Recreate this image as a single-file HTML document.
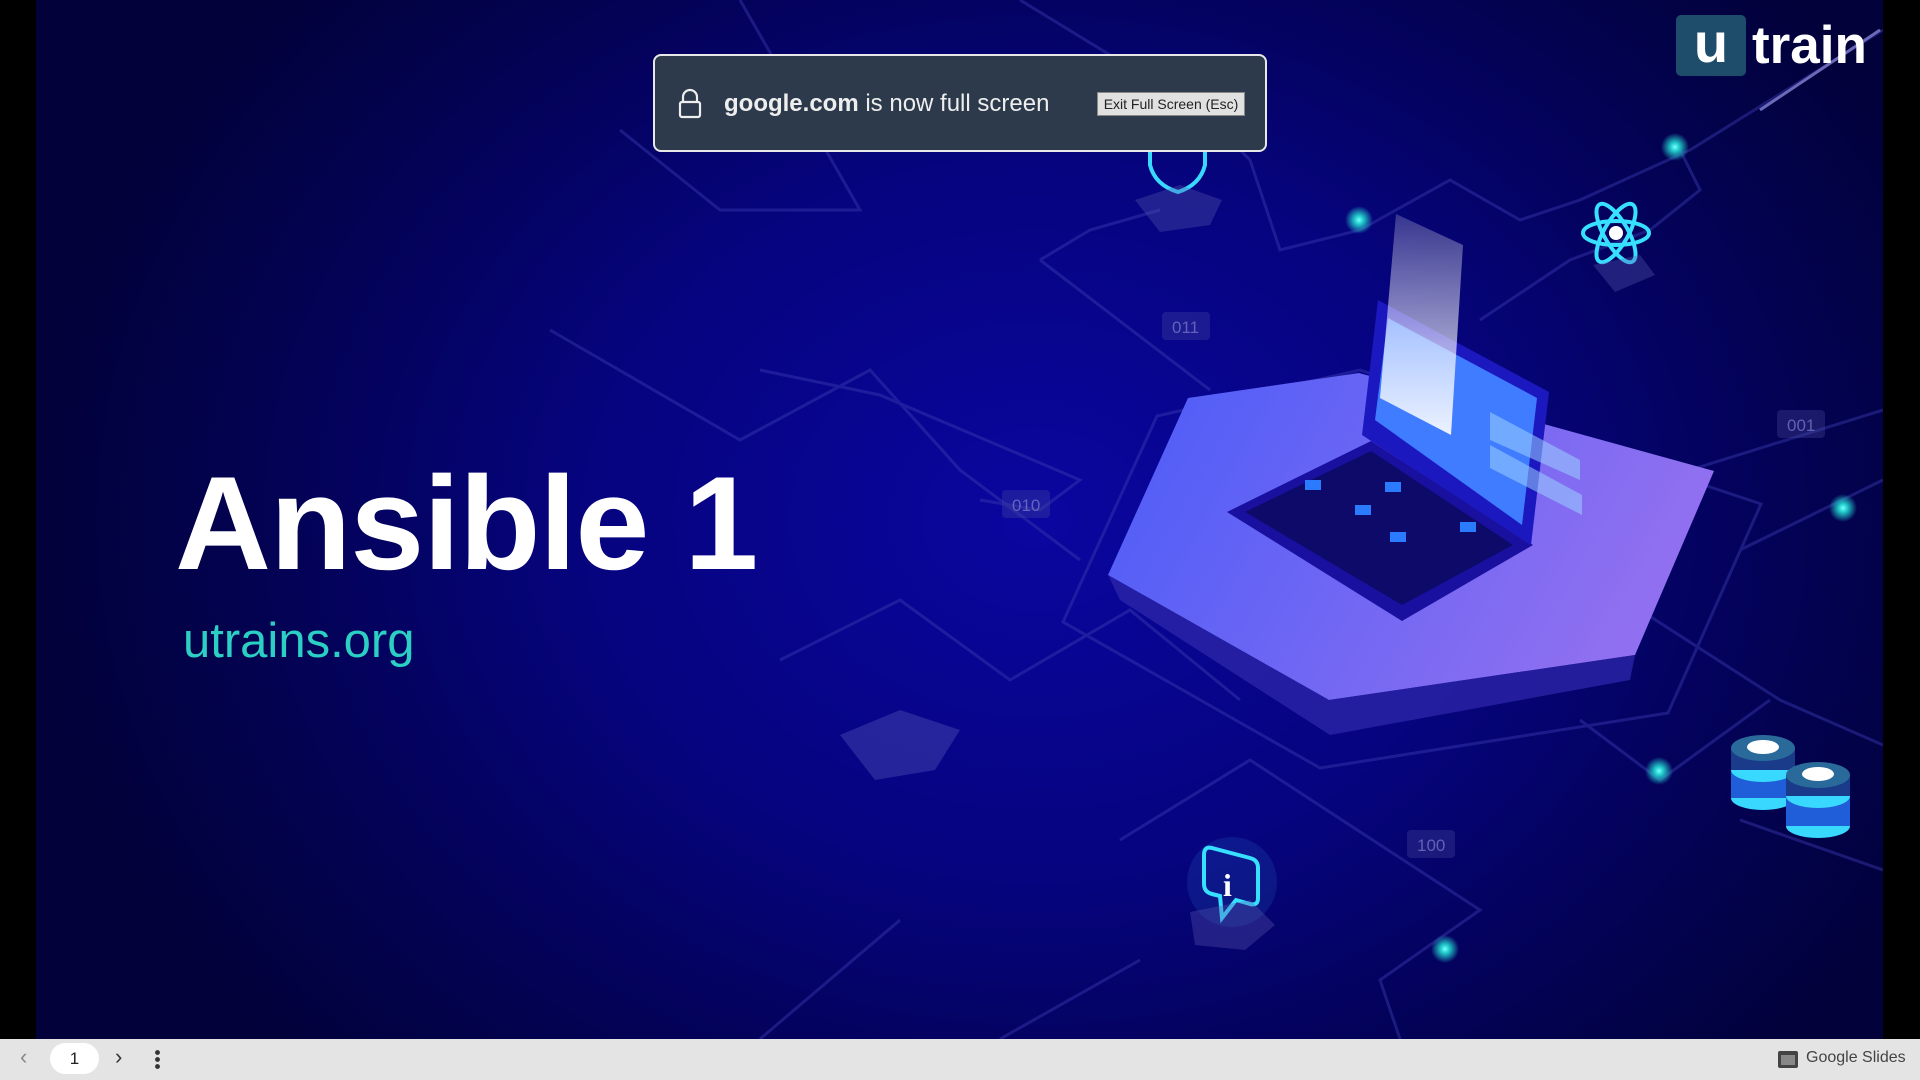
<!DOCTYPE html>
<html><head><meta charset="utf-8"><style>
*{margin:0;padding:0;box-sizing:border-box}
html,body{width:1920px;height:1080px;overflow:hidden;background:#000;font-family:"Liberation Sans",sans-serif}
#slide{position:absolute;left:36px;top:0;width:1847px;height:1039px;overflow:hidden;
background:radial-gradient(ellipse 1000px 800px at 1000px 520px,#0a06a0 0%,#06047e 45%,#030255 75%,#02013a 100%)}
.abs{position:absolute}
#bar{position:absolute;left:0;top:1039px;width:1920px;height:41px;background:#e4e4e4}
</style></head><body>
<div id="slide">
<svg class="abs" style="left:0;top:0" width="1847" height="1039" viewBox="36 0 1847 1039">
<defs>
<linearGradient id="hx" x1="0" y1="0" x2="1" y2="0.3"><stop offset="0" stop-color="#4a5cf8"/><stop offset="1" stop-color="#9070f0"/></linearGradient>
<radialGradient id="gl"><stop offset="0" stop-color="#7ff"/><stop offset="0.3" stop-color="#2cc"/><stop offset="1" stop-color="#2cc" stop-opacity="0"/></radialGradient>
<linearGradient id="gs" x1="0" y1="0" x2="0" y2="1"><stop offset="0" stop-color="#fff" stop-opacity="0.2"/><stop offset="1" stop-color="#fff" stop-opacity="0.9"/></linearGradient>
</defs>
<g fill="none" stroke="#3a3ab0" stroke-width="3" opacity="0.45">
<path d="M1020 0 L1200 110 L1250 160 L1280 250 L1360 230 L1450 180 L1520 220 L1580 200 L1690 150 L1883 30"/>
<path d="M1040 260 L1210 390 M1040 260 L1090 230 L1160 210"/>
<path d="M740 0 L860 210 L720 210 L620 130"/>
<path d="M760 370 L880 395 L1080 480 L1040 510 L980 500"/>
<path d="M550 330 L740 440 L870 370 L960 470 L1080 560"/>
<path d="M780 660 L900 600 L1010 680 L1130 610 L1240 700"/>
<path d="M1120 840 L1250 760 L1480 910 L1380 980 L1400 1039"/>
<path d="M1690 470 L1883 410 M1740 550 L1883 480"/>
<path d="M1640 610 L1780 700 L1883 745 M1580 720 L1660 780 L1770 700"/>
<path d="M1680 150 L1700 190 L1650 230 L1570 260 L1480 320"/>
<path d="M1740 820 L1883 870"/>
<path d="M1000 1039 L1140 960 M760 1039 L900 920"/>
<path d="M1063 622 L1157 416 L1360 370 L1761 504 L1668 713 L1320 768 Z"/>
</g>
<path d="M840 735 L900 710 L960 730 L935 770 L875 780 Z" fill="#6060c0" opacity="0.35"/>
<path d="M1188 398 L1359 373 L1714 471 L1635 655 L1329 700 L1108 575 Z" fill="url(#hx)"/>
<path d="M1108 575 L1329 700 L1635 655 L1630 680 L1330 735 L1120 600 Z" fill="#2a24a8" opacity="0.8"/>
<path d="M1227 512 L1371 441 L1533 545 L1402 621 Z" fill="#1a10a0"/>
<path d="M1245 512 L1371 451 L1513 545 L1402 605 Z" fill="#0d0a6a"/>
<g fill="#2a7bff"><rect x="1305" y="480" width="16" height="10"/><rect x="1355" y="505" width="16" height="10"/><rect x="1390" y="532" width="16" height="10"/><rect x="1460" y="522" width="16" height="10"/><rect x="1385" y="482" width="16" height="10"/></g>
<path d="M1362 435 L1378 300 L1549 392 L1531 545 Z" fill="#1c18c0"/>
<path d="M1375 420 L1388 318 L1537 398 L1522 525 Z" fill="#3f7cff"/>
<path d="M1490 412 L1580 460 L1580 480 L1490 440 Z M1490 445 L1582 495 L1582 515 L1490 468 Z" fill="#9ad0ff" opacity="0.55"/>
<path d="M1396 214 L1463 245 L1451 435 L1380 398 Z" fill="url(#gs)"/>
<g>
<circle cx="1359" cy="220" r="14" fill="url(#gl)"/><circle cx="1675" cy="147" r="14" fill="url(#gl)"/>
<circle cx="1843" cy="508" r="14" fill="url(#gl)"/><circle cx="1659" cy="771" r="14" fill="url(#gl)"/>
<circle cx="1445" cy="949" r="14" fill="url(#gl)"/>
</g>
<g fill="none" stroke="#38e0ff" stroke-width="4">
<ellipse cx="1616" cy="233" rx="33" ry="12"/><ellipse cx="1616" cy="233" rx="33" ry="12" transform="rotate(60 1616 233)"/><ellipse cx="1616" cy="233" rx="33" ry="12" transform="rotate(-60 1616 233)"/>
</g><circle cx="1616" cy="233" r="7" fill="#fff"/>
<path d="M1593 265 L1640 255 L1655 275 L1615 292 Z" fill="#5a5ab0" opacity="0.35"/>
<path d="M1150 140 Q1178 150 1205 140 L1205 165 Q1200 185 1178 192 Q1155 185 1150 165 Z" fill="none" stroke="#38d8ff" stroke-width="4"/>
<path d="M1135 200 L1180 185 L1222 200 L1210 225 L1160 232 Z" fill="#5a5ab0" opacity="0.35"/>
<circle cx="1232" cy="882" r="45" fill="#3ab0ff" opacity="0.12"/>
<path d="M1212 848 L1250 858 Q1258 860 1258 868 L1258 898 Q1258 906 1250 904 L1236 900 L1222 918 L1220 896 L1212 894 Q1204 892 1204 884 L1204 855 Q1204 846 1212 848 Z" fill="none" stroke="#38e0ff" stroke-width="4"/>
<text x="1223" y="896" font-family="Liberation Serif" font-weight="bold" font-size="32" fill="#fff">i</text>
<path d="M1190 912 L1250 900 L1275 925 L1245 950 L1195 945 Z" fill="#5a5ab0" opacity="0.35"/>
<g>
<ellipse cx="1763" cy="798" rx="32" ry="12" fill="#38d8ff"/><rect x="1731" y="770" width="64" height="28" fill="#1f5ed8"/><ellipse cx="1763" cy="770" rx="32" ry="12" fill="#38d8ff"/>
<rect x="1731" y="748" width="64" height="22" fill="#1a3a8a"/><ellipse cx="1763" cy="748" rx="32" ry="13" fill="#2a6a9a"/><ellipse cx="1763" cy="747" rx="16" ry="7" fill="#fff"/>
<ellipse cx="1818" cy="826" rx="32" ry="12" fill="#38d8ff"/><rect x="1786" y="796" width="64" height="30" fill="#1f5ed8"/><ellipse cx="1818" cy="796" rx="32" ry="12" fill="#38d8ff"/>
<rect x="1786" y="775" width="64" height="21" fill="#1a3a8a"/><ellipse cx="1818" cy="775" rx="32" ry="13" fill="#2a6a9a"/><ellipse cx="1818" cy="774" rx="16" ry="7" fill="#fff"/>
</g>
<g font-family="Liberation Sans" font-size="17" fill="#7a7ac8" opacity="0.8">
<rect x="1162" y="312" width="48" height="28" rx="4" fill="#4a4aa0" opacity="0.4"/><text x="1172" y="333">011</text>
<rect x="1002" y="490" width="48" height="28" rx="4" fill="#4a4aa0" opacity="0.4"/><text x="1012" y="511">010</text>
<rect x="1777" y="410" width="48" height="28" rx="4" fill="#4a4aa0" opacity="0.4"/><text x="1787" y="431">001</text>
<rect x="1407" y="830" width="48" height="28" rx="4" fill="#4a4aa0" opacity="0.4"/><text x="1417" y="851">100</text>
</g>
<path d="M1880 30 L1760 110" stroke="#6a6ab8" stroke-width="3"/>
</svg>
<div class="abs" style="left:139px;top:449px;font-size:133px;font-weight:bold;color:#fff;letter-spacing:-1px;line-height:150px">Ansible 1</div>
<div class="abs" style="left:147px;top:611px;font-size:49px;color:#2ccfc4;line-height:60px">utrains.org</div>
<div class="abs" style="left:1640px;top:15px;width:70px;height:61px;background:#1e4d6b;border-radius:5px;color:#fff;font-weight:bold;font-size:56px;text-align:center;line-height:56px">u</div>
<div class="abs" style="left:1716px;top:11px;color:#fff;font-weight:bold;font-size:53px;line-height:70px">train</div>
</div>
<div class="abs" style="left:653px;top:54px;width:614px;height:98px;background:#2c3a4b;border:2px solid #e8e8e8;border-radius:8px"></div>
<svg class="abs" style="left:678px;top:88px" width="24" height="32" viewBox="0 0 24 32"><path d="M5 14 V9 a7 7 0 0 1 14 0 V14" fill="none" stroke="#eee" stroke-width="2.2"/><rect x="2" y="14" width="20" height="15" rx="2" fill="none" stroke="#eee" stroke-width="2.2"/></svg>
<div class="abs" style="left:724px;top:90px;font-size:24px;color:#eee;white-space:nowrap"><b>google.com</b> is now full screen</div>
<div class="abs" style="left:1097px;top:92px;width:148px;height:24px;background:#e1e1e1;border:1px solid #888;font-size:14px;color:#222;text-align:center;line-height:22px">Exit Full Screen (Esc)</div>
<div id="bar">
<div class="abs" style="left:20px;top:5px;font-size:22px;color:#888">&#8249;</div>
<div class="abs" style="left:50px;top:4px;width:49px;height:31px;background:#fff;border-radius:16px;text-align:center;line-height:31px;font-size:17px;color:#222">1</div>
<div class="abs" style="left:115px;top:5px;font-size:22px;color:#333">&#8250;</div>
<div class="abs" style="left:155px;top:10px;width:5px;height:21px;background:radial-gradient(circle,#333 2.2px,transparent 2.6px) 0 0/5px 7px repeat-y"></div>
<div class="abs" style="left:1778px;top:12px;width:20px;height:17px;border:3px solid #444;border-top-width:4px;border-radius:2px;background:#888"></div>
<div class="abs" style="left:1806px;top:10px;font-size:16px;color:#444">Google Slides</div>
</div>
</body></html>
